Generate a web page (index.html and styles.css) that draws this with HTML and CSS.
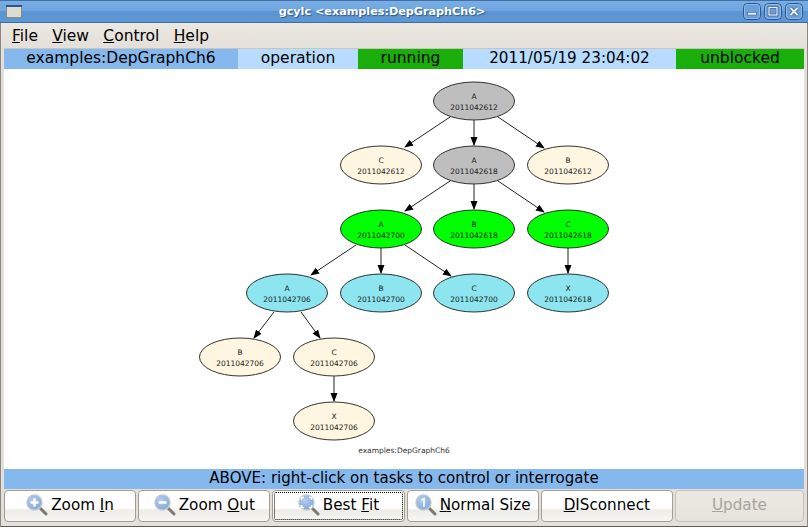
FILE: index.html
```html
<!DOCTYPE html>
<html lang="en">
<head>
<meta charset="utf-8">
<title>gcylc</title>
<link rel="stylesheet" href="styles.css">
</head>
<body>
<div class="window">
  <header class="titlebar">
    <svg class="win-icon" width="16" height="13" viewBox="0 0 16 13"><rect x=".5" y=".5" width="15" height="12" fill="#dcdcd4" stroke="#8a8a84"/><rect x="0" y="0" width="16" height="2" fill="#2a5690"/></svg>
    <div class="title">gcylc &lt;examples:DepGraphCh6&gt;</div>
    <div class="win-btns">
      <svg class="win-btn" width="18" height="17" viewBox="0 0 18 17"><rect x=".5" y=".5" width="17" height="16" rx="4" fill="#6a9fda" stroke="#2c5488"/><rect x="1.500" y="1.500" width="15" height="14" rx="3" fill="none" stroke="#8fbbea"/><rect x="4.500" y="9.500" width="9" height="2.500" fill="#e8f0f8" stroke="#2c5488" stroke-width=".5"/></svg>
      <svg class="win-btn" width="18" height="17" viewBox="0 0 18 17"><rect x=".5" y=".5" width="17" height="16" rx="4" fill="#6a9fda" stroke="#2c5488"/><rect x="1.500" y="1.500" width="15" height="14" rx="3" fill="none" stroke="#8fbbea"/><rect x="5" y="4.500" width="8" height="7.500" fill="none" stroke="#2c5488" stroke-width="2.500"/><rect x="5" y="4.500" width="8" height="7.500" fill="none" stroke="#e8f0f8" stroke-width="1.300"/></svg>
      <svg class="win-btn" width="18" height="17" viewBox="0 0 18 17"><rect x=".5" y=".5" width="17" height="16" rx="4" fill="#6a9fda" stroke="#2c5488"/><rect x="1.500" y="1.500" width="15" height="14" rx="3" fill="none" stroke="#8fbbea"/><path d="M5.500 5l7 7M12.500 5l-7 7" stroke="#2c5488" stroke-width="3.200"/><path d="M5.500 5l7 7M12.500 5l-7 7" stroke="#f0f4fa" stroke-width="2"/></svg>
    </div>
  </header>
  <div class="client">
    <nav class="menubar">
      <span class="menu"><u>F</u>ile</span>
      <span class="menu"><u>V</u>iew</span>
      <span class="menu"><u>C</u>ontrol</span>
      <span class="menu"><u>H</u>elp</span>
    </nav>
    <div class="status">
      <div class="cell blue suite">examples:DepGraphCh6</div>
      <div class="cell pale mode">operation</div>
      <div class="cell green state">running</div>
      <div class="cell pale time">2011/05/19 23:04:02</div>
      <div class="cell green block">unblocked</div>
    </div>
    <main class="canvas">
      <svg class="graph" width="800" height="401" viewBox="4 69 800 401">
        <defs>
          <marker id="arrow" markerWidth="9" markerHeight="8" refX="8" refY="4" orient="auto" markerUnits="userSpaceOnUse"><path d="M0 0.5L9 4L0 7.5z" fill="#000"/></marker>
        </defs>
        <g class="edges">
          <line x1="450" y1="117" x2="405" y2="147" marker-end="url(#arrow)"/>
          <line x1="474" y1="120" x2="474" y2="145" marker-end="url(#arrow)"/>
          <line x1="498" y1="117" x2="544" y2="148" marker-end="url(#arrow)"/>
          <line x1="450" y1="181" x2="405" y2="211" marker-end="url(#arrow)"/>
          <line x1="474" y1="184" x2="474" y2="209" marker-end="url(#arrow)"/>
          <line x1="498" y1="181" x2="544" y2="212" marker-end="url(#arrow)"/>
          <line x1="356" y1="245" x2="311" y2="275" marker-end="url(#arrow)"/>
          <line x1="381" y1="248" x2="381" y2="273" marker-end="url(#arrow)"/>
          <line x1="405" y1="245" x2="451" y2="276" marker-end="url(#arrow)"/>
          <line x1="568" y1="248" x2="568" y2="273" marker-end="url(#arrow)"/>
          <line x1="274" y1="312" x2="254" y2="338" marker-end="url(#arrow)"/>
          <line x1="301" y1="312" x2="320" y2="338" marker-end="url(#arrow)"/>
          <line x1="334" y1="376" x2="334" y2="401" marker-end="url(#arrow)"/>
        </g>
        <g class="nodes">
          <g class="node grey"><ellipse cx="474" cy="101" rx="40.500" ry="19"/><text x="474" y="98.500">A</text><text x="474" y="110">2011042612</text></g>
          <g class="node cream"><ellipse cx="381" cy="165" rx="40.500" ry="19"/><text x="381" y="162.500">C</text><text x="381" y="174">2011042612</text></g>
          <g class="node grey"><ellipse cx="474" cy="165" rx="40.500" ry="19"/><text x="474" y="162.500">A</text><text x="474" y="174">2011042618</text></g>
          <g class="node cream"><ellipse cx="568" cy="165" rx="40.500" ry="19"/><text x="568" y="162.500">B</text><text x="568" y="174">2011042612</text></g>
          <g class="node lime"><ellipse cx="381" cy="229" rx="40.500" ry="19"/><text x="381" y="226.500">A</text><text x="381" y="238">2011042700</text></g>
          <g class="node lime"><ellipse cx="474" cy="229" rx="40.500" ry="19"/><text x="474" y="226.500">B</text><text x="474" y="238">2011042618</text></g>
          <g class="node lime"><ellipse cx="568" cy="229" rx="40.500" ry="19"/><text x="568" y="226.500">C</text><text x="568" y="238">2011042618</text></g>
          <g class="node cyan"><ellipse cx="287" cy="293" rx="40.500" ry="19"/><text x="287" y="290.500">A</text><text x="287" y="302">2011042706</text></g>
          <g class="node cyan"><ellipse cx="381" cy="293" rx="40.500" ry="19"/><text x="381" y="290.500">B</text><text x="381" y="302">2011042700</text></g>
          <g class="node cyan"><ellipse cx="474" cy="293" rx="40.500" ry="19"/><text x="474" y="290.500">C</text><text x="474" y="302">2011042700</text></g>
          <g class="node cyan"><ellipse cx="568" cy="293" rx="40.500" ry="19"/><text x="568" y="290.500">X</text><text x="568" y="302">2011042618</text></g>
          <g class="node cream"><ellipse cx="240" cy="357" rx="40.500" ry="19"/><text x="240" y="354.500">B</text><text x="240" y="366">2011042706</text></g>
          <g class="node cream"><ellipse cx="334" cy="357" rx="40.500" ry="19"/><text x="334" y="354.500">C</text><text x="334" y="366">2011042706</text></g>
          <g class="node cream"><ellipse cx="334" cy="421" rx="40.500" ry="19"/><text x="334" y="418.500">X</text><text x="334" y="430">2011042706</text></g>
        </g>
        <text class="graph-label" x="404" y="453">examples:DepGraphCh6</text>
      </svg>
    </main>
    <div class="hint">ABOVE: right-click on tasks to control or interrogate</div>
    <div class="buttons">
      <button class="btn"><svg class="mag" width="22" height="22" viewBox="0 0 22 22"><use href="#lens"/><path d="M4.500 8.500h8M8.500 4.500v8" class="mark"/></svg><span>Zoom <u>I</u>n</span></button>
      <button class="btn"><svg class="mag" width="22" height="22" viewBox="0 0 22 22"><use href="#lens"/><path d="M4.500 8.500h8" class="mark"/></svg><span>Zoom <u>O</u>ut</span></button>
      <button class="btn focus"><svg class="mag" width="22" height="22" viewBox="0 0 22 22"><use href="#lens"/><path d="M3.500 6V3.500H6M11 3.500H13.500V6M13.500 11V13.500H11M6 13.500H3.500V11" class="mark thin"/></svg><span>Best <u>F</u>it</span></button>
      <button class="btn"><svg class="mag" width="22" height="22" viewBox="0 0 22 22"><use href="#lens"/><path d="M6.500 6l2.500-1.500V13" class="mark thin"/></svg><span><u>N</u>ormal Size</span></button>
      <button class="btn"><span><u>D</u>ISconnect</span></button>
      <button class="btn off" disabled><span><u>U</u>pdate</span></button>
    </div>
    <svg class="sprites" width="0" height="0">
      <defs>
        <radialGradient id="glass" cx=".4" cy=".35" r=".7"><stop offset="0" stop-color="#b4cdee"/><stop offset="1" stop-color="#7fa6da"/></radialGradient>
        <g id="lens">
          <path d="M13.500 13.500L20 20" stroke="#7a7a72" stroke-width="3" stroke-linecap="round"/>
          <circle cx="8.500" cy="8.500" r="7.500" fill="url(#glass)" stroke="#c0c8d2" stroke-width="1.500"/>
        </g>
      </defs>
    </svg>
  </div>
</div>
</body>
</html>
```
FILE: styles.css
```css
* { box-sizing: border-box; }
html, body { margin: 0; padding: 0; }
body { width: 808px; height: 527px; overflow: hidden; font-family: "DejaVu Sans", sans-serif; }
.window { width: 808px; height: 527px; display: flex; flex-direction: column; background: #e6e2dc; }
.titlebar {
  height: 23px; display: flex; align-items: center; padding: 0 5px 0 6px;
  background: linear-gradient(#79aee3 0, #6ea6df 45%, #5b94d2 50%, #5f97d4 100%);
  border-top: 1px solid #3f6fa8; border-bottom: 1px solid #3b6ca6;
}
.win-icon { display: block; }
.title {
  flex: 1; text-align: center; color: #fff; font: bold 11.200px "DejaVu Sans", sans-serif;
  text-shadow: 1px 1px 1px #2f5a8e; padding-right: 1px;
}
.win-btns { display: flex; gap: 3px; }
.win-btn { display: block; }
.client { flex: 1; display: flex; flex-direction: column; padding: 0 3px 4px; min-height: 0; border-left: 1px solid #8a8880; border-right: 1px solid #8a8880; border-bottom: 1px solid #5d5b55; background: linear-gradient(#ebe7e1, #e4e0d9 26px); }
.menubar { height: 26px; display: flex; align-items: center; font-size: 15.500px; color: #000; padding-left: 8px; gap: 14.300px; border-bottom: 1px solid #c9c5be; flex: none; }
.status { height: 20px; display: flex; flex: none; font-size: 15.500px; line-height: 19px; text-align: center; color: #000; }
.cell { white-space: nowrap; overflow: hidden; }
.blue { background: #85b9ee; }
.pale { background: #b8dcff; }
.green { background: #1aae0b; }
.suite { width: 234px; }
.mode { width: 120px; }
.state { width: 105px; }
.time { width: 213px; font-size: 15.200px; }
.block { width: 128px; }
.canvas { flex: 1; min-height: 0; background: #fff; }
.graph { display: block; }
.edges line { stroke: #222; stroke-width: 1; }
.node ellipse { stroke: #1c1c1c; stroke-width: .9; }
.node text { font-size: 7.500px; text-anchor: middle; fill: #1a1a1a; }
.graph-label { font-size: 7.500px; text-anchor: middle; fill: #333; }
.grey ellipse { fill: #bebebe; }
.cream ellipse { fill: #fef6e0; }
.lime ellipse { fill: #00ff00; }
.cyan ellipse { fill: #8ce5ef; }
.hint { height: 20px; flex: none; background: #85b9ee; text-align: center; font-size: 15.050px; line-height: 19px; color: #000; }
.buttons { display: grid; grid-template-columns: repeat(5, 132.200px) 1fr; gap: 2px; flex: none; height: 33px; padding-top: 1px; }
.btn {
  font: 15.200px "DejaVu Sans", sans-serif; color: #000; display: flex; align-items: center; justify-content: center; gap: 3px; padding: 0 0 2px;
  background: linear-gradient(#fff 0, #fff 55%, #efece8 65%, #f7f6f3 100%);
  border: 1px solid #a29e94; border-radius: 4px;
}
.focus { outline: 1px dotted #000; outline-offset: -3px; }
.off { color: #a8a49c; background: linear-gradient(#ece8e2, #e6e2dc); border-color: #c4c0b8; }
.mag { display: block; flex: none; }
.mark { fill: none; stroke: #fff; stroke-width: 2.500; }
.thin { stroke-width: 1.500; }
.sprites { position: absolute; }
```
